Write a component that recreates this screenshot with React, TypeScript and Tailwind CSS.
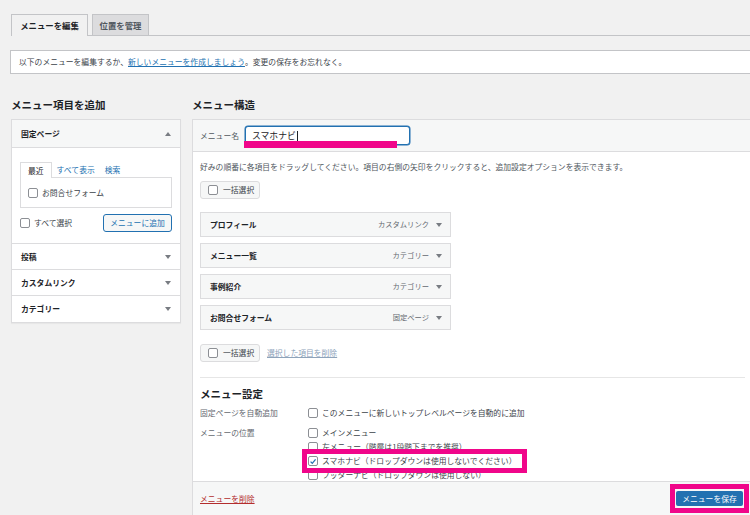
import type { FC } from "react";

const Check: FC<{ checked?: boolean }> = ({ checked = false }) => (
  <span className="inline-flex size-[10px] shrink-0 items-center justify-center rounded-[2px] border border-[#8c8f94] bg-white">
    {checked && (
      <svg viewBox="0 0 10 10" className="size-[9px]">
        <path d="M2 5.2 L4.1 7.3 L8.2 2.4" fill="none" stroke="#2271b1" strokeWidth="1.6" />
      </svg>
    )}
  </span>
);

const Arrow: FC<{ up?: boolean }> = ({ up = false }) => (
  <svg viewBox="0 0 6 4" className="h-[4px] w-[6px] shrink-0">
    <path d={up ? "M0 4 L3 0 L6 4 Z" : "M0 0 L3 4 L6 0 Z"} fill="#787c82" />
  </svg>
);

const accordion = ["投稿", "カスタムリンク", "カテゴリー"];

const menuItems = [
  { title: "プロフィール", type: "カスタムリンク" },
  { title: "メニュー一覧", type: "カテゴリー" },
  { title: "事例紹介", type: "カテゴリー" },
  { title: "お問合せフォーム", type: "固定ページ" },
];

const BulkSelect: FC = () => (
  <div className="flex h-[18px] w-[60px] items-center gap-[5px] rounded-[3px] border border-[#dcdcde] bg-[#f6f7f7] pl-[7px] text-[7.8px] text-[#3c434a]">
    <Check />
    <span>一括選択</span>
  </div>
);

export default function App() {
  return (
    <div className="relative h-[515px] w-[750px] overflow-hidden bg-[#f1f1f1] font-['Noto_Sans_CJK_JP',sans-serif] text-[#1d2327]">
      {/* tabs */}
      <div className="ml-[11px] mt-[14px] flex h-[22px] items-end gap-[4px] border-b border-[#c3c4c7]">
        <div className="-mb-px flex h-[22px] w-[77px] items-center justify-center border border-b-0 border-[#c3c4c7] bg-[#f1f1f1] text-[8.4px] font-bold">
          メニューを編集
        </div>
        <div className="flex h-[21px] w-[57px] items-center justify-center border border-b-0 border-[#c3c4c7] bg-[#dcdcde] text-[8.4px] font-semibold text-[#50575e]">
          位置を管理
        </div>
      </div>

      {/* notice */}
      <div className="ml-[10px] mt-[14px] flex h-[24px] w-[760px] items-center border border-[#c3c4c7] bg-white px-[8px] text-[7.8px] text-[#3c434a]">
        以下のメニューを編集するか、
        <span className="text-[#2271b1] underline">新しいメニューを作成しましょう</span>
        。変更の保存をお忘れなく。
      </div>

      <div className="mt-[24px] flex gap-[11px] pl-[11px]">
        {/* left column */}
        <div className="w-[170px] shrink-0">
          <h2 className="h-[14px] text-[10.5px] font-bold leading-[14px]">メニュー項目を追加</h2>
          <div className="mt-[7px] border border-[#dcdcde] bg-white shadow-[0_1px_1px_rgba(0,0,0,0.04)]">
            <div className="flex h-[28px] items-center justify-between border-b border-[#dcdcde] bg-[#f6f7f7] pl-[9px] pr-[9px] text-[7.8px] font-semibold">
              <span>固定ページ</span>
              <Arrow up />
            </div>
            <div className="border-b border-[#dcdcde] px-[8px] pb-[11px] pt-[13px]">
              <div className="flex h-[16px] items-end text-[7.8px]">
                <div className="-mb-px flex h-[16px] items-center border border-b-0 border-[#dcdcde] bg-white px-[7px]">
                  最近
                </div>
                <span className="px-[5px] leading-[15px] text-[#2271b1]">すべて表示</span>
                <span className="px-[5px] leading-[15px] text-[#2271b1]">検索</span>
              </div>
              <div className="flex h-[31px] items-center gap-[4px] border border-[#dcdcde] pl-[7px] text-[7.8px] text-[#3c434a]">
                <Check />
                <span>お問合せフォーム</span>
              </div>
              <div className="mt-[6px] flex h-[18px] items-center justify-between">
                <div className="flex items-center gap-[4px] text-[7.8px] text-[#3c434a]">
                  <Check />
                  <span>すべて選択</span>
                </div>
                <div className="flex h-[18px] w-[69px] items-center justify-center rounded-[3px] border border-[#2271b1] bg-[#f6f7f7] text-[7.8px] text-[#2271b1]">
                  メニューに追加
                </div>
              </div>
            </div>
            {accordion.map((label, i) => (
              <div
                key={label}
                className={`flex h-[26px] items-center justify-between pl-[9px] pr-[9px] text-[7.8px] font-semibold ${
                  i < accordion.length - 1 ? "border-b border-[#dcdcde]" : ""
                }`}
              >
                <span>{label}</span>
                <Arrow />
              </div>
            ))}
          </div>
        </div>

        {/* right column */}
        <div className="w-[566px] shrink-0">
          <h2 className="h-[14px] text-[10.5px] font-bold leading-[14px]">メニュー構造</h2>
          <div className="mt-[7px] border border-[#dcdcde] bg-white">
            <div className="flex h-[32px] items-center gap-[6px] border-b border-[#dcdcde] bg-[#f6f7f7] px-[7px] text-[7.8px] text-[#50575e]">
              <span className="w-[39px]">メニュー名</span>
              <span className="relative block">
                <span className="flex h-[19px] w-[165px] items-center rounded-[3px] border border-[#2271b1] bg-white pl-[6px] text-[8.8px] text-[#1d2327] shadow-[0_0_0_0.5px_#2271b1]">
                  スマホナビ
                  <span className="ml-px h-[10px] w-px bg-[#1d2327]" />
                </span>
                <span className="absolute left-[-1px] top-[15px] h-[7px] w-[153px] bg-[#f0068a]" />
              </span>
            </div>

            <div className="pl-[7px] pr-[12px]">
              <p className="pt-[9px] text-[7.8px] leading-[12px] text-[#50575e]">
                好みの順番に各項目をドラッグしてください。項目の右側の矢印をクリックすると、追加設定オプションを表示できます。
              </p>
              <div className="mt-[8px]">
                <BulkSelect />
              </div>

              <div className="mt-[13px] flex w-[251px] flex-col gap-[6px]">
                {menuItems.map((item) => (
                  <div
                    key={item.title}
                    className="flex h-[25px] items-center justify-between border border-[#dcdcde] bg-[#f6f7f7] pl-[9px] pr-[8px]"
                  >
                    <span className="text-[7.8px] font-bold">{item.title}</span>
                    <span className="flex items-center gap-[7px]">
                      <span className="text-[7.3px] text-[#646970]">{item.type}</span>
                      <Arrow />
                    </span>
                  </div>
                ))}
              </div>

              <div className="mt-[14px] flex items-center gap-[7px]">
                <BulkSelect />
                <span className="text-[7.8px] text-[#8ea3ba] underline">選択した項目を削除</span>
              </div>

              {/* settings */}
              <div className="mt-[15px] h-[104px] overflow-hidden border-t border-[#e6e6e6] pt-[9px]">
                <h3 className="h-[14px] text-[10.5px] font-bold leading-[14px]">メニュー設定</h3>
                <div className="mt-[5px] flex h-[14px] items-center text-[7.8px]">
                  <span className="w-[108px] text-[#646970]">固定ページを自動追加</span>
                  <span className="flex items-center gap-[4px] text-[#3c434a]">
                    <Check />
                    このメニューに新しいトップレベルページを自動的に追加
                  </span>
                </div>
                <div className="mt-[6px] flex text-[7.8px]">
                  <span className="h-[14px] w-[108px] leading-[14px] text-[#646970]">メニューの位置</span>
                  <div className="flex flex-col text-[#3c434a]">
                    <div className="flex h-[14px] items-center gap-[4px]">
                      <Check />
                      メインメニュー
                    </div>
                    <div className="flex h-[14px] items-center gap-[4px]">
                      <Check />
                      左メニュー（階層は1段階下までを推奨）
                    </div>
                    <div className="relative flex h-[14px] items-center">
                      <span className="absolute left-[-6px] top-[-5px] h-[24px] w-[225px] border-[5px] border-[#f0068a] bg-white" />
                      <span className="relative z-10 flex items-center gap-[4px]">
                        <Check checked />
                        スマホナビ（ドロップダウンは使用しないでください）
                      </span>
                    </div>
                    <div className="flex h-[14px] items-center gap-[4px]">
                      <Check />
                      フッターナビ（ドロップダウンは使用しない）
                    </div>
                  </div>
                </div>
              </div>
            </div>

            {/* footer */}
            <div className="flex h-[34px] items-center justify-between border-t border-[#dcdcde] bg-[#f6f7f7] pl-[7px] pr-[8px]">
              <span className="text-[7.8px] text-[#b32d2e] underline">メニューを削除</span>
              <div className="border-[5px] border-[#f0068a] px-px py-[2px]">
                <div className="flex h-[15px] w-[67px] items-center justify-center rounded-[2px] bg-[#2271b1] text-[7.8px] text-white">
                  メニューを保存
                </div>
              </div>
            </div>
          </div>
        </div>
      </div>
    </div>
  );
}
